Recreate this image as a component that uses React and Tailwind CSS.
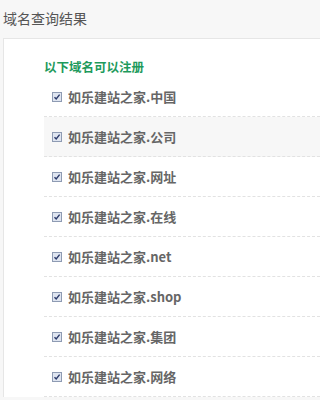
import React from "react";

const domains = [
  "如乐建站之家.中国",
  "如乐建站之家.公司",
  "如乐建站之家.网址",
  "如乐建站之家.在线",
  "如乐建站之家.net",
  "如乐建站之家.shop",
  "如乐建站之家.集团",
  "如乐建站之家.网络",
];

function Check() {
  return (
    <span className="flex h-[10px] w-[10px] shrink-0 items-center justify-center border border-[#8e9bb3] bg-[#dfe5f0]">
      <svg width="8" height="8" viewBox="0 0 8 8">
        <path d="M1.5 4.2 L3.2 6 L6.6 1.6" fill="none" stroke="#2b3a6b" strokeWidth="1.4" />
      </svg>
    </span>
  );
}

export default function App() {
  return (
    <div
      className="h-[400px] w-full overflow-hidden bg-[#f7f7f7]"
      style={{ fontFamily: '"Noto Sans CJK SC", "Noto Sans", sans-serif' }}
    >
      {/* title */}
      <div className="h-[38px] pl-[3px] pt-[9px] text-[14px] leading-[18px] text-[#555]">
        域名查询结果
      </div>

      {/* result card */}
      <div className="ml-[3px] border-l border-t border-[#e6e6e6] bg-white pl-[40px] pt-[20px]">
        <div className="mb-[2px] text-[12.5px] font-bold leading-[16px] text-[#1e9a5c]">
          以下域名可以注册
        </div>
        {domains.map((d, i) => (
          <div
            key={d}
            className={`flex h-[40px] items-center gap-[6px] border-b border-dashed border-[#e2e2e2] pl-[8px] ${
              i === 1 ? "bg-[#f7f7f7]" : ""
            }`}
          >
            <Check />
            <span className="text-[13px] font-semibold text-[#666]">{d}</span>
          </div>
        ))}
      </div>
    </div>
  );
}
